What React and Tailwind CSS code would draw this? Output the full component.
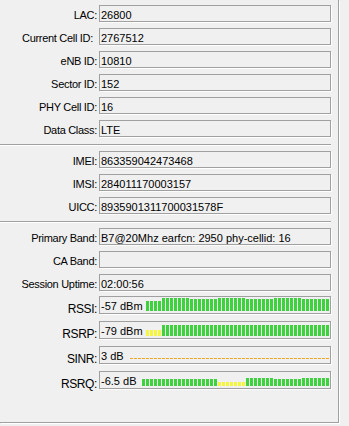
import React from "react";

const group1 = [
  ["LAC:", "26800"],
  ["Current Cell ID:", "2767512"],
  ["eNB ID:", "10810"],
  ["Sector ID:", "152"],
  ["PHY Cell ID:", "16"],
  ["Data Class:", "LTE"],
];
const group2 = [
  ["IMEI:", "863359042473468"],
  ["IMSI:", "284011170003157"],
  ["UICC:", "8935901311700031578F"],
];
const group3 = [
  ["Primary Band:", "B7@20Mhz earfcn: 2950 phy-cellid: 16"],
  ["CA Band:", ""],
  ["Session Uptime:", "02:00:56"],
];

const GREEN = "#3fd23f";
const YELLOW = "#f6f63c";

function rssiBars() {
  const out = [];
  for (let i = 0; i < 46; i++) {
    let h;
    if (i < 4) h = 10;
    else h = Math.floor((i - 4) / 7) % 2 === 0 ? 13 : 12;
    out.push({ h, c: GREEN });
  }
  return out;
}
function rsrpBars() {
  const out = [];
  for (let i = 0; i < 46; i++) {
    out.push(i < 4 ? { h: 6, c: YELLOW } : { h: 11, c: GREEN });
  }
  return out;
}
function rsrqBars() {
  const out = [];
  for (let i = 0; i < 47; i++) {
    if (i <= 18) out.push({ h: 7, c: GREEN });
    else if (i <= 25) out.push({ h: 4, c: YELLOW });
    else if (i <= 32) out.push({ h: 8, c: GREEN });
    else if (i <= 39) out.push({ h: 7, c: GREEN });
    else out.push({ h: 8, c: GREEN });
  }
  return out;
}

function Label({ children, extra = "" }) {
  return (
    <div
      className={`w-[97px] shrink-0 text-right text-[11px] leading-[13px] tracking-[-0.3px] text-black whitespace-nowrap ${extra}`}
    >
      {children}
    </div>
  );
}

function TextRow({ label, value }) {
  const isCur = label === "Current Cell ID:";
  return (
    <div className="flex items-start gap-[2px]">
      <Label extra={isCur ? "pt-[4px] pr-[4px]" : "pt-[4px]"}>{label}</Label>
      <div className="w-[232px] h-[17px] border border-[#a0a0a0] shadow-[1px_1px_0_#ffffff] pt-[3px] pl-[1px] text-[11px] leading-[13px] text-black whitespace-nowrap overflow-hidden">
        {value}
      </div>
    </div>
  );
}

function Bars({ bars }) {
  return (
    <div className="flex items-end gap-[1px]">
      {bars.map((b, i) => (
        <div
          key={i}
          className="w-[3px] shrink-0"
          style={{ height: b.h + "px", backgroundColor: b.c }}
        />
      ))}
    </div>
  );
}

function SignalRow({ label, value, textW, children }) {
  return (
    <div className="flex items-start gap-[2px]">
      <div className="w-[97px] shrink-0 text-right text-[12px] leading-[13px] tracking-[-0.4px] text-black pt-[7px]">
        {label}
      </div>
      <div className="w-[232px] h-[18px] border border-[#a0a0a0] shadow-[1px_1px_0_#ffffff] flex items-end pb-[2px] pl-[1px] overflow-hidden">
        <div
          className={`${textW} shrink-0 self-start pt-[3px] text-[11px] leading-[13px] text-black whitespace-nowrap`}
        >
          {value}
        </div>
        {children}
      </div>
    </div>
  );
}

function Separator() {
  return <div className="w-[331px] h-px bg-[#a0a0a0] shadow-[0_1px_0_#ffffff]" />;
}

export default function App() {
  return (
    <div
      className="w-[349px] h-[426px] bg-[#f0f0f0]"
      style={{ fontFamily: '"Liberation Sans", Arial, sans-serif' }}
    >
      <div className="w-[339px] h-[423px] border-r border-b border-[#a0a0a0] shadow-[1px_1px_0_#ffffff] flex flex-col pt-[5px]">
        <div className="flex flex-col gap-[6px]">
          {group1.map(([l, v]) => (
            <TextRow key={l} label={l} value={v} />
          ))}
        </div>
        <div className="mt-[7px] mb-[6px]">
          <Separator />
        </div>
        <div className="flex flex-col gap-[6px]">
          {group2.map(([l, v]) => (
            <TextRow key={l} label={l} value={v} />
          ))}
        </div>
        <div className="mt-[7px] mb-[6px]">
          <Separator />
        </div>
        <div className="flex flex-col gap-[6px]">
          {group3.map(([l, v]) => (
            <TextRow key={l} label={l} value={v} />
          ))}
        </div>
        <div className="flex flex-col gap-[5px] mt-[5px]">
          <SignalRow label="RSSI:" value="-57 dBm" textW="w-[45px]">
            <Bars bars={rssiBars()} />
          </SignalRow>
          <SignalRow label="RSRP:" value="-79 dBm" textW="w-[45px]">
            <Bars bars={rsrpBars()} />
          </SignalRow>
          <SignalRow label="SINR:" value="3 dB" textW="w-[29px]">
            <svg width="200" height="3" className="mb-[1px]">
              <line
                x1="0"
                y1="1.5"
                x2="200"
                y2="1.5"
                stroke="#f2a526"
                strokeWidth="1"
                strokeDasharray="3 1"
              />
            </svg>
          </SignalRow>
          <SignalRow label="RSRQ:" value="-6.5 dB" textW="w-[41px]">
            <Bars bars={rsrqBars()} />
          </SignalRow>
        </div>
      </div>
    </div>
  );
}
